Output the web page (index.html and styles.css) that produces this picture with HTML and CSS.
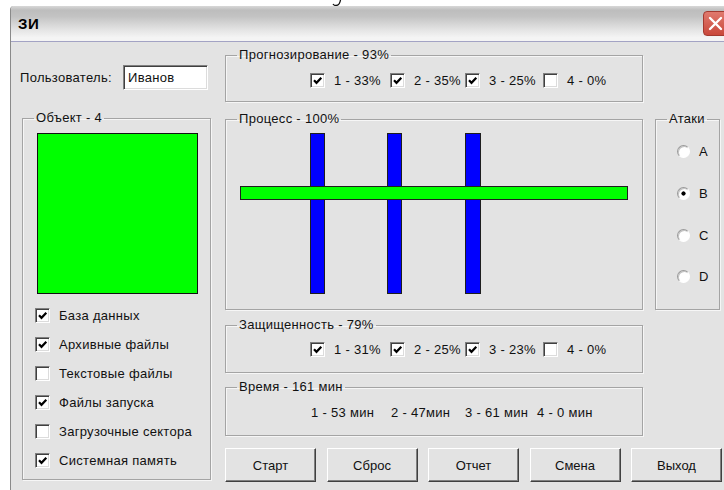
FILE: index.html
```html
<!DOCTYPE html>
<html lang="ru">
<head>
<meta charset="utf-8">
<title>ЗИ</title>
<link rel="stylesheet" href="styles.css">
</head>
<body>
<svg class="scraps" width="724" height="6" viewBox="0 0 724 6">
  <path d="M340.5 0 C340 3 338.5 5.5 336 5.5 C334.5 5.5 333.5 4.8 333 4" fill="none" stroke="#111" stroke-width="1.3"/>
</svg>
<div class="window">
  <div class="titlebar">
    <span class="title">ЗИ</span>
    <span class="close">
      <svg width="25" height="25" viewBox="0 0 25 25"><path d="M7 7 L18 18 M18 7 L7 18" stroke="#fff" stroke-width="2.4" stroke-linecap="round"/></svg>
    </span>
  </div>
  <div class="client">
    <div class="col-left">
      <div class="user-row">
        <label class="user-label">Пользователь:</label>
        <div class="edit">Иванов</div>
      </div>
      <fieldset class="group object">
        <legend>Объект - 4</legend>
        <div class="inner">
          <div class="swatch"></div>
          <ul class="checklist">
            <li><span class="cb on"></span>База данных</li>
            <li><span class="cb on"></span>Архивные файлы</li>
            <li><span class="cb"></span>Текстовые файлы</li>
            <li><span class="cb on"></span>Файлы запуска</li>
            <li><span class="cb"></span>Загрузочные сектора</li>
            <li><span class="cb on"></span>Системная память</li>
          </ul>
        </div>
      </fieldset>
    </div>
    <div class="col-right">
      <fieldset class="group forecast">
        <legend>Прогнозирование - 93%</legend>
        <div class="inner cb-row">
          <span class="item"><span class="cb on"></span>1 - 33%</span>
          <span class="item"><span class="cb on"></span>2 - 35%</span>
          <span class="item"><span class="cb on"></span>3 - 25%</span>
          <span class="item"><span class="cb"></span>4 - 0%</span>
        </div>
      </fieldset>
      <div class="mid-row">
        <fieldset class="group process">
          <legend>Процесс - 100%</legend>
          <svg class="chart" width="416" height="182" viewBox="0 0 416 182" shape-rendering="crispEdges">
            <rect x="84.5" y="7.5" width="14" height="160" fill="#0000ff" stroke="#1e1e1e"/>
            <rect x="161.5" y="7.5" width="14" height="160" fill="#0000ff" stroke="#1e1e1e"/>
            <rect x="239.5" y="7.5" width="15" height="160" fill="#0000ff" stroke="#1e1e1e"/>
            <rect x="14.5" y="60.5" width="387" height="13" fill="#00ff00" stroke="#1e1e1e"/>
          </svg>
        </fieldset>
        <fieldset class="group attacks">
          <legend>Атаки</legend>
          <div class="inner radios">
            <div class="radio-row"><span class="radio"></span>A</div>
            <div class="radio-row"><span class="radio on"></span>B</div>
            <div class="radio-row"><span class="radio"></span>C</div>
            <div class="radio-row"><span class="radio"></span>D</div>
          </div>
        </fieldset>
      </div>
      <fieldset class="group security">
        <legend>Защищенность - 79%</legend>
        <div class="inner cb-row">
          <span class="item"><span class="cb on"></span>1 - 31%</span>
          <span class="item"><span class="cb on"></span>2 - 25%</span>
          <span class="item"><span class="cb on"></span>3 - 23%</span>
          <span class="item"><span class="cb"></span>4 - 0%</span>
        </div>
      </fieldset>
      <fieldset class="group time">
        <legend>Время - 161 мин</legend>
        <div class="inner time-row">
          <span>1 - 53 мин</span>
          <span>2 - 47мин</span>
          <span>3 - 61 мин</span>
          <span>4 - 0 мин</span>
        </div>
      </fieldset>
      <div class="buttons">
        <button class="btn">Старт</button>
        <button class="btn">Сброс</button>
        <button class="btn">Отчет</button>
        <button class="btn">Смена</button>
        <button class="btn">Выход</button>
      </div>
    </div>
  </div>
</div>
</body>
</html>
```
FILE: styles.css
```css
* { box-sizing: border-box; }

html, body { margin: 0; padding: 0; }

body {
  width: 724px;
  height: 490px;
  overflow: hidden;
  background: #fff;
  font-family: "Liberation Sans", Arial, sans-serif;
  font-size: 13px;
  letter-spacing: 0.3px;
  color: #111;
}

.scraps { display: block; }

/* dialog frame */
.window {
  margin-left: 10px;
  width: 724px;
  height: 484px;
  background: #e3e3e3;
  border-left: 1px solid #8a8a8a;
  border-top-left-radius: 4px;
  overflow: hidden;
}

.titlebar {
  height: 36px;
  display: flex;
  align-items: center;
  padding-left: 7px;
  background: linear-gradient(#d8d8d8 0, #bdbdbd 12%, #c3c3c3 30%, #e4e4e4 68%, #f4f4f4 90%);
  border-bottom: 1px solid #a3a3c4;
}

.title {
  font-weight: bold;
  font-size: 15px;
  letter-spacing: 0.5px;
  color: #000;
}

.close {
  margin-left: auto;
  margin-right: 6px;
  width: 25px;
  height: 25px;
  border-radius: 4px;
  background: linear-gradient(#e07a6e, #c9483b);
  border: 1px solid #a33a30;
  display: flex;
  align-items: center;
  justify-content: center;
}

.close svg { display: block; margin: -1px; }

.client {
  display: flex;
  padding-left: 9px;
}

/* left column */
.col-left { width: 192px; }

.user-row {
  display: grid;
  grid-template-columns: 103px 85px;
  align-items: center;
  margin-top: 23px;
  height: 25px;
}

.edit {
  height: 25px;
  background: #fff;
  border: 1px solid;
  border-color: #808080 #fff #fff #808080;
  box-shadow: inset 1px 1px #404040, inset -1px -1px #dcdcdc;
  padding: 4px 0 0 4px;
  line-height: 15px;
}

/* etched group boxes */
.group {
  margin: 0;
  padding: 0;
  min-width: 0;
  border: 1px solid #a4a4a4;
  box-shadow: inset 1px 1px #f6f6f6, 1px 1px #f6f6f6;
}

.group > legend {
  margin-left: 11px;
  padding: 0 2px;
  line-height: 14px;
}

.object {
  margin-top: 21px;
  margin-left: 2px;
  width: 189px;
  height: 369px;
}

.object .inner { padding: 8px 0 0 12px; }

.swatch {
  margin-left: 2px;
  width: 161px;
  height: 161px;
  background: #00ff00;
  border: 1px solid #111;
}

.checklist {
  list-style: none;
  margin: 7px 0 0;
  padding: 0;
}

.checklist li {
  height: 29px;
  display: flex;
  align-items: center;
  gap: 9px;
}

/* sunken check box */
.cb {
  flex: none;
  width: 15px;
  height: 15px;
  background: #fff;
  border: 1px solid;
  border-color: #808080 #fff #fff #808080;
  box-shadow: inset 1px 1px #404040, inset -1px -1px #dcdcdc;
  display: inline-block;
}

.cb.on {
  background: #fff url("data:image/svg+xml,%3Csvg xmlns='http://www.w3.org/2000/svg' width='13' height='13'%3E%3Cpath d='M3 6.2 L5.5 8.8 L10.3 3.8' fill='none' stroke='%23000' stroke-width='2.2'/%3E%3C/svg%3E") no-repeat 0 0;
}

/* right column */
.col-right {
  margin-left: 13px;
  width: 497px;
}

.forecast {
  margin-top: 6px;
  width: 418px;
  height: 54px;
}

.forecast .inner { padding: 11px 0 0 84px; }

.cb-row {
  display: grid;
  grid-template-columns: 80px 75px 78px auto;
  align-items: center;
}

.cb-row .item {
  display: flex;
  align-items: center;
  gap: 9px;
  white-space: nowrap;
}

.mid-row {
  display: flex;
  margin-top: 10px;
}

.process {
  width: 418px;
  height: 198px;
}

.chart { display: block; }

.attacks {
  margin-left: 12px;
  width: 65px;
  height: 198px;
}

.attacks .inner { padding: 5px 0 0 21px; }

.radio-row {
  height: 41.7px;
  display: flex;
  align-items: center;
  gap: 9px;
}

.radio {
  width: 13px;
  height: 13px;
  border-radius: 50%;
  background: #fff;
  border: 1px solid;
  border-color: #9a9a9a #fff #fff #9a9a9a;
  box-shadow: inset 1px 1px #c4c4c4;
}

.radio.on {
  background: radial-gradient(circle, #000 0 1.8px, #fff 2.4px);
}

.security {
  margin-top: 8px;
  width: 418px;
  height: 55px;
}

.security .inner { padding: 10px 0 0 84px; }

.time {
  margin-top: 7px;
  width: 418px;
  height: 56px;
}

.time .inner { padding: 12px 0 0 85px; }

.time-row {
  display: grid;
  grid-template-columns: 80px 74px 72px auto;
  line-height: 14px;
  white-space: nowrap;
}

.buttons {
  margin-top: 12px;
  display: flex;
  justify-content: space-between;
}

.btn {
  width: 91px;
  height: 34px;
  margin: 0;
  padding: 0;
  font: inherit;
  color: #111;
  background: #e3e3e3;
  border: 1px solid;
  border-color: #fff #404040 #404040 #fff;
  box-shadow: inset -1px -1px #808080;
}
```
